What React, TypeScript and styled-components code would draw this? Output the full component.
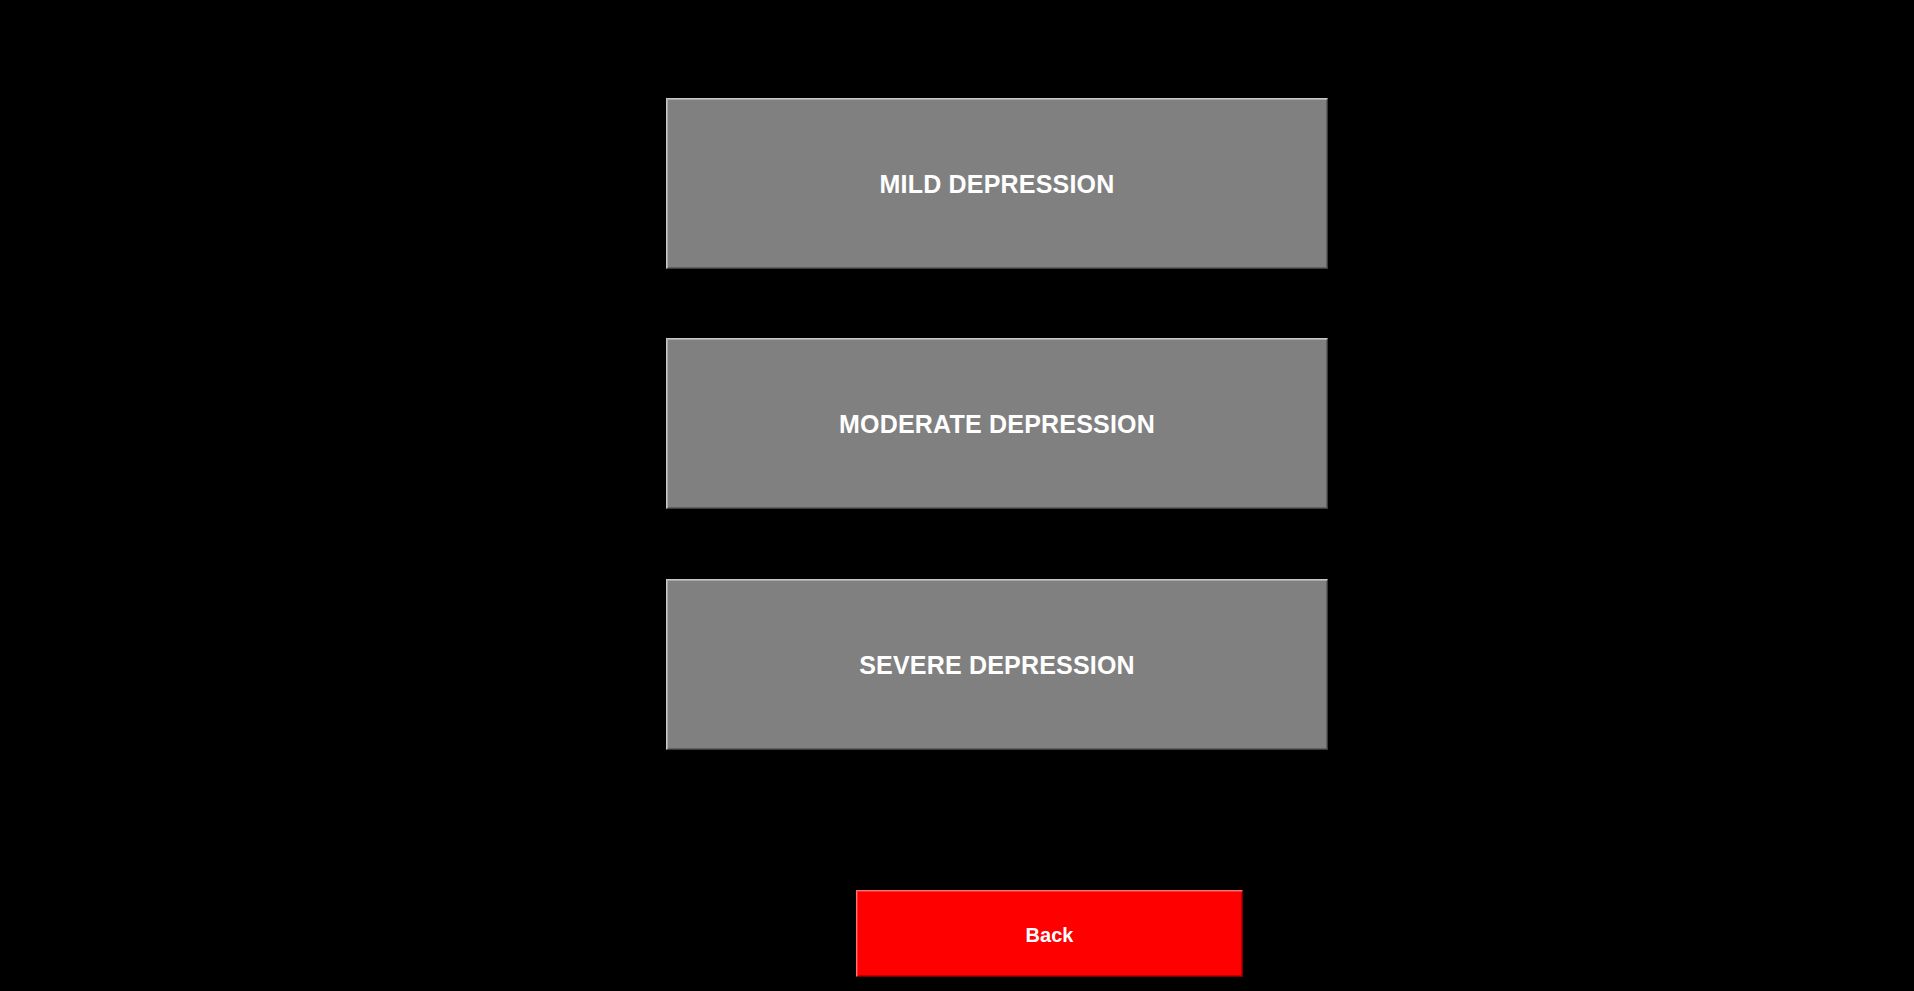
import React from 'react'
import styled, { createGlobalStyle } from 'styled-components'

const GlobalStyle = createGlobalStyle`
  html, body {
    margin: 0;
    padding: 0;
    background-color: #000000;
  }
  body {
    font-family: 'Liberation Sans', Arial, sans-serif;
    min-height: 991px;
  }
`

const Page = styled.div`
  display: flex;
  flex-direction: column;
  align-items: flex-start;
  padding: 98px 0 0 666px;
  height: 991px;
  box-sizing: border-box;
`

const Choices = styled.div`
  display: flex;
  flex-direction: column;
  gap: 69px;
`

const ChoiceButton = styled.button`
  width: 662px;
  height: 171px;
  box-sizing: border-box;
  background-color: #808080;
  border-style: solid;
  border-width: 1px;
  border-color: #c8c8c8 #3c3c3c #3c3c3c #c8c8c8;
  box-shadow: inset 1px 1px 0 #a8a8a8, inset -1px -1px 0 #606060;
  color: #ffffff;
  font-family: 'Liberation Sans', Arial, sans-serif;
  font-weight: bold;
  font-size: 25px;
  letter-spacing: 0.2px;
  padding: 2px 0 0;
  cursor: pointer;
  outline: none;

  &:last-child {
    margin-top: 1px;
  }
`

const BackButton = styled.button`
  margin: 140px 0 0 190px;
  width: 387px;
  height: 87px;
  box-sizing: border-box;
  background-color: #ff0000;
  border-style: solid;
  border-width: 1px;
  border-color: #ff7070 #7a0000 #7a0000 #ff7070;
  box-shadow: inset 1px 1px 0 #ff3030, inset -1px -1px 0 #c00000;
  color: #ffffff;
  font-family: 'Liberation Sans', Arial, sans-serif;
  font-weight: bold;
  font-size: 20px;
  padding: 3px 0 0;
  cursor: pointer;
  outline: none;
`

const levels = ['MILD DEPRESSION', 'MODERATE DEPRESSION', 'SEVERE DEPRESSION']

export default function App() {
  return (
    <>
      <GlobalStyle />
      <Page>
        <Choices>
          {levels.map(level => (
            <ChoiceButton type='button' key={level}>
              {level}
            </ChoiceButton>
          ))}
        </Choices>
        <BackButton type='button'>Back</BackButton>
      </Page>
    </>
  )
}
